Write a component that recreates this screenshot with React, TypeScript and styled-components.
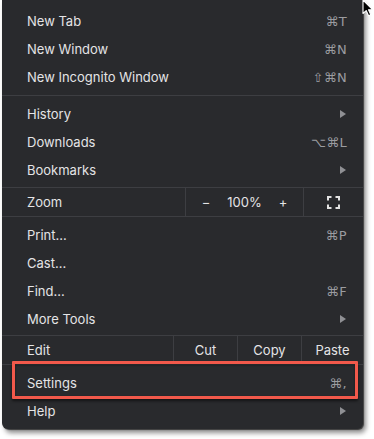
import { createGlobalStyle, styled } from 'styled-components'

const GlobalStyle = createGlobalStyle`
  html, body {
    margin: 0;
    background: #ffffff;
  }
  body {
    font-family: Inter, "Noto Sans", "DejaVu Sans", sans-serif;
    -webkit-font-smoothing: antialiased;
  }
`

type Entry =
  | { kind: 'item'; label: string; keys?: string; submenu?: boolean; marked?: boolean }
  | { kind: 'sep' }
  | { kind: 'zoom' }
  | { kind: 'edit' }

const entries: Entry[] = [
  { kind: 'item', label: 'New Tab', keys: '⌘T' },
  { kind: 'item', label: 'New Window', keys: '⌘N' },
  { kind: 'item', label: 'New Incognito Window', keys: '⇧⌘N' },
  { kind: 'sep' },
  { kind: 'item', label: 'History', submenu: true },
  { kind: 'item', label: 'Downloads', keys: '⌥⌘L' },
  { kind: 'item', label: 'Bookmarks', submenu: true },
  { kind: 'zoom' },
  { kind: 'item', label: 'Print...', keys: '⌘P' },
  { kind: 'item', label: 'Cast...' },
  { kind: 'item', label: 'Find...', keys: '⌘F' },
  { kind: 'item', label: 'More Tools', submenu: true },
  { kind: 'edit' },
  { kind: 'item', label: 'Settings', keys: '⌘,', marked: true },
  { kind: 'item', label: 'Help', submenu: true }
]

export default function App() {
  return (
    <>
      <GlobalStyle />
      <Page>
        <Menu>
          {entries.map((entry, i) => {
            if (entry.kind === 'sep') return <Separator key={i} />
            if (entry.kind === 'zoom') {
              return (
                <GroupRow key={i}>
                  <GroupLabel>Zoom</GroupLabel>
                  <ZoomCell>
                    <span>−</span>
                    <span>100%</span>
                    <span>+</span>
                  </ZoomCell>
                  <GroupCell $width={60}>
                    <FullscreenIcon />
                  </GroupCell>
                </GroupRow>
              )
            }
            if (entry.kind === 'edit') {
              return (
                <GroupRow key={i} $tight>
                  <GroupLabel>Edit</GroupLabel>
                  <GroupCell $width={64}>Cut</GroupCell>
                  <GroupCell $width={64}>Copy</GroupCell>
                  <GroupCell $width={62}>Paste</GroupCell>
                </GroupRow>
              )
            }
            return (
              <Item key={i}>
                <Label>{entry.label}</Label>
                {entry.keys && <Keys>{entry.keys}</Keys>}
                {entry.submenu && <Arrow />}
                {entry.marked && <Highlight />}
              </Item>
            )
          })}
        </Menu>
        <Cursor viewBox="0 0 12 18" width="12" height="18">
          <path
            d="M1 1 L1 14.5 L4.2 11.6 L6.6 16.8 L8.8 15.8 L6.5 10.8 L10.8 10.8 Z"
            fill="#000"
            stroke="#fff"
            strokeWidth="1.1"
            strokeLinejoin="round"
          />
        </Cursor>
      </Page>
    </>
  )
}

const FullscreenIcon = () => (
  <svg width="13" height="13" viewBox="0 0 13 13">
    <path
      d="M1 4.5 V1 H4.5 M8.5 1 H12 V4.5 M12 8.5 V12 H8.5 M4.5 12 H1 V8.5"
      fill="none"
      stroke="#e3e3e3"
      strokeWidth="2"
    />
  </svg>
)

const Page = styled.div`
  position: relative;
  width: 374px;
  height: 439px;
  padding-left: 2px;
  box-sizing: border-box;
  overflow: hidden;
`

const Menu = styled.div`
  width: 361px;
  padding: 7px 0 4px;
  background: #292a2d;
  border-radius: 0 0 6px 6px;
  box-shadow: 3px 4px 5px rgba(0, 0, 0, 0.45), 1px 1px 1px rgba(0, 0, 0, 0.6);
  color: #e4e4e6;
  font-size: 13px;
`

const Item = styled.div`
  position: relative;
  display: flex;
  align-items: center;
  height: 28px;
  padding: 0 16px 0 25px;
`

const Label = styled.span`
  flex: 1;
`

const Keys = styled.span`
  color: #9b9ca0;
  font-family: "DejaVu Sans", Inter, sans-serif;
  font-size: 13px;
  letter-spacing: 0.3px;
`

const Arrow = styled.span`
  width: 0;
  height: 0;
  margin-right: 1px;
  border-top: 4px solid transparent;
  border-bottom: 4px solid transparent;
  border-left: 6px solid #8f9094;
`

const Highlight = styled.div`
  position: absolute;
  left: 10px;
  right: 5px;
  top: -8px;
  bottom: -2px;
  border: 3px solid #f2594b;
  border-radius: 1px;
  box-shadow: 0 2px 3px rgba(0, 0, 0, 0.55), inset 0 1px 2px rgba(0, 0, 0, 0.5);
  pointer-events: none;
`

const Separator = styled.div`
  height: 1px;
  margin: 4px 0;
  background: #3d3e42;
`

const GroupRow = styled.div<{ $tight?: boolean }>`
  display: flex;
  height: 28px;
  margin: ${p => (p.$tight ? '2px' : '3px')} 0 4px;
  border-top: 1px solid #3d3e42;
  border-bottom: 1px solid #3d3e42;
`

const GroupLabel = styled.div`
  flex: 1;
  display: flex;
  align-items: center;
  padding-left: 25px;
`

const GroupCell = styled.div<{ $width: number }>`
  width: ${p => p.$width}px;
  display: flex;
  align-items: center;
  justify-content: center;
  border-left: 1px solid #3d3e42;
  box-sizing: border-box;
`

const ZoomCell = styled.div`
  width: 118px;
  display: grid;
  grid-template-columns: 36px 1fr 36px;
  align-items: center;
  justify-items: center;
  padding: 0 2px;
  border-left: 1px solid #3d3e42;
  box-sizing: border-box;
`

const Cursor = styled.svg`
  position: absolute;
  top: -1px;
  left: 362px;
`
